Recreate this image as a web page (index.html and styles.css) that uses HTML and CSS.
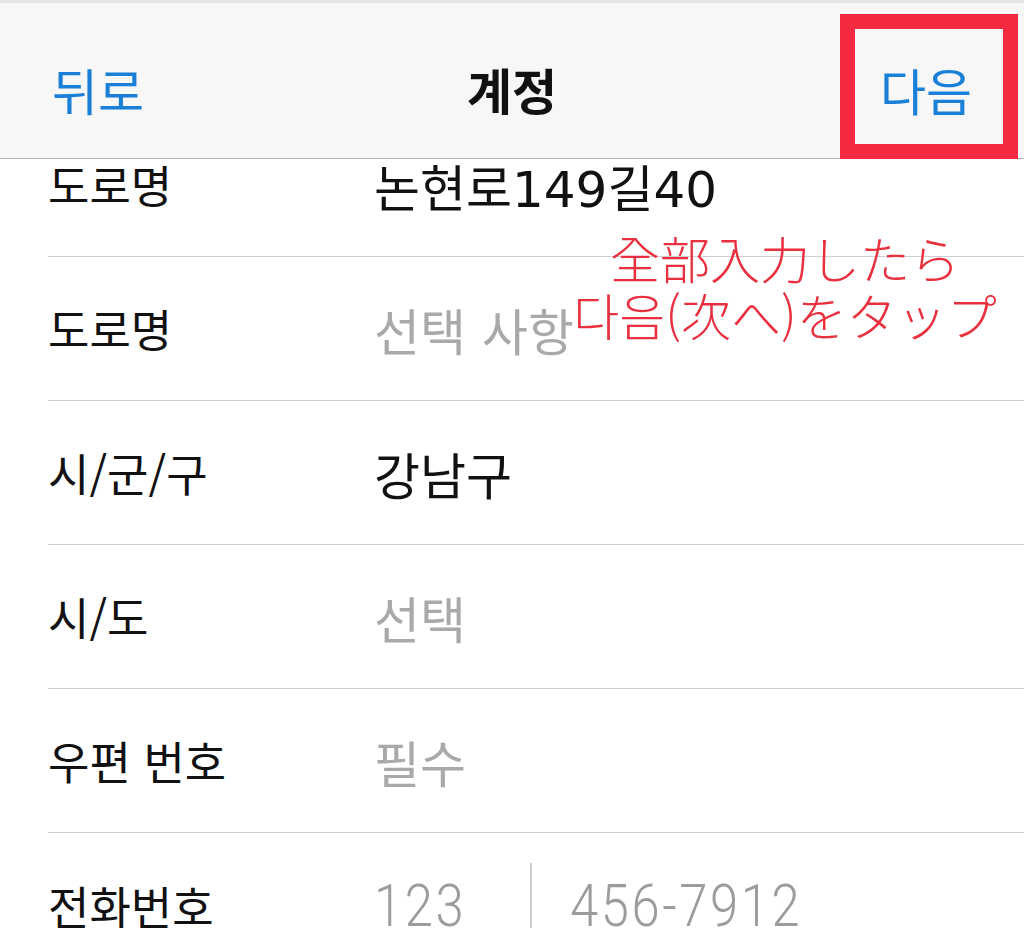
FILE: index.html
```html
<!DOCTYPE html>
<html lang="ko">
<head>
<meta charset="utf-8">
<link rel="stylesheet" href="styles.css">
</head>
<body>
<div class="screen">
  <header class="nav">
    <span class="nav-btn back">뒤로</span>
    <span class="nav-title">계정</span>
    <span class="nav-btn next">다음</span>
    <div class="highlight"></div>
  </header>
  <div class="viewport">
    <div class="list">
      <div class="row"><div class="row-inner"><span class="label">도로명</span><span class="value">논현로149길40</span></div></div>
      <div class="row"><div class="row-inner"><span class="label">도로명</span><span class="value ph">선택 사항</span></div></div>
      <div class="row"><div class="row-inner"><span class="label">시/군/구</span><span class="value">강남구</span></div></div>
      <div class="row"><div class="row-inner"><span class="label">시/도</span><span class="value ph">선택</span></div></div>
      <div class="row"><div class="row-inner"><span class="label">우편 번호</span><span class="value ph">필수</span></div></div>
      <div class="row"><div class="row-inner"><span class="label">전화번호</span><span class="value ph num area">123</span><span class="divider"></span><span class="value ph num">456-7912</span></div></div>
    </div>
    <div class="note">全部入力したら<br>다음(次へ)をタップ</div>
  </div>
</div>
</body>
</html>
```
FILE: styles.css
```css
html, body {
  margin: 0;
  padding: 0;
  background: #ffffff;
}
.screen {
  width: 1024px;
  height: 928px;
  overflow: hidden;
  position: relative;
  font-family: "Noto Sans CJK KR", "Noto Sans", sans-serif;
  color: #111;
}
.nav {
  position: relative;
  z-index: 2;
  height: 159px;
  background: #f7f7f8;
  border-top: 3px solid #e4e4e6;
  border-bottom: 1px solid #b4b4b6;
  display: flex;
  align-items: center;
  justify-content: space-between;
  padding: 16px 52px 0 52px;
  box-sizing: border-box;
}
.nav-btn {
  color: #1a7fd6;
  font-size: 50px;
  font-weight: 400;
  line-height: 1;
}
.nav-title {
  position: absolute;
  left: 0;
  right: 0;
  top: 16px;
  bottom: 0;
  display: flex;
  align-items: center;
  justify-content: center;
  font-size: 49px;
  font-weight: 700;
  line-height: 1;
  pointer-events: none;
}
.highlight {
  position: absolute;
  left: 840px;
  top: 11px;
  width: 178px;
  height: 145px;
  box-sizing: border-box;
  border: 15px solid #f42a40;
}
.viewport {
  position: relative;
  height: 769px;
  overflow: hidden;
}
.list {
  margin-top: -46px;
}
.row {
  height: 144px;
  padding-left: 48px;
  box-sizing: border-box;
}
.row-inner {
  height: 144px;
  box-sizing: border-box;
  border-bottom: 1.5px solid #cfcfd2;
  display: flex;
  align-items: center;
}
.label {
  width: 326px;
  font-size: 45px;
  font-weight: 400;
  color: #111;
  flex: none;
}
.value {
  font-family: "DejaVu Sans", "Noto Sans CJK KR", sans-serif;
  font-size: 50px;
  color: #111;
}
.value.ph {
  color: #a9a9ab;
}
.value.num {
  font-family: "Roboto", "Liberation Sans", sans-serif;
  font-weight: 300;
  font-size: 59px;
  letter-spacing: 3px;
  transform: scaleX(0.86);
  transform-origin: left center;
  color: #9c9c9e;
}
.value.area {
  width: 156px;
  flex: none;
}
.divider {
  align-self: flex-start;
  margin-top: 30px;
  width: 1.5px;
  height: 114px;
  background: #cfcfd2;
  margin-right: 38px;
}
.row:last-child .row-inner {
  border-bottom: none;
}
.note {
  position: absolute;
  left: 560px;
  top: 70px;
  width: 450px;
  text-align: center;
  font-family: "Noto Sans CJK JP", "Noto Sans CJK KR", sans-serif;
  font-weight: 300;
  font-size: 50px;
  line-height: 57px;
  color: #e8303f;
}
```
